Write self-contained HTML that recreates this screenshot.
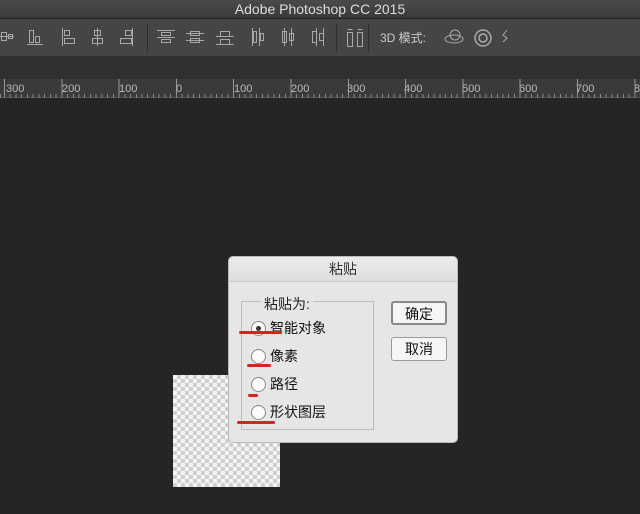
<!DOCTYPE html><html><head><meta charset="utf-8"><style>
*{margin:0;padding:0;box-sizing:border-box}
body{width:640px;height:514px;overflow:hidden;background:#252525;font-family:"Liberation Sans","Noto Sans CJK SC",sans-serif;position:relative}
.t{position:absolute;left:0;top:0;width:640px;height:19px;background:linear-gradient(#4a4a4a,#3a3a3a);border-bottom:1px solid #222;color:#ddd;font-size:14px;text-align:center;line-height:18px}
.tb{position:absolute;left:0;top:19px;width:640px;height:38px;background:#454545;border-bottom:1px solid #303030}
.strip{position:absolute;left:0;top:57px;width:640px;height:22px;background:#303030}
.ruler{position:absolute;left:0;top:79px;width:640px;height:19px;background:#3a3a3a;border-bottom:1px solid #555}
.ruler span{position:absolute;top:4px;font-size:11px;color:#bbb}
svg.i{position:absolute;top:28px}
.dlg{position:absolute;left:228px;top:256px;width:230px;height:187px;background:#e6e6e6;border-radius:5px;border:1px solid #bbb}
.dt{height:25px;border-bottom:1px solid #c8c8c8;text-align:center;font-size:14px;line-height:25px;color:#333;background:linear-gradient(#ececec,#dedede);border-radius:5px 5px 0 0}
.grp{position:absolute;left:12px;top:44px;width:133px;height:129px;border:1px solid #bdbdbd}
.lg{position:absolute;left:32px;top:37px;background:#e6e6e6;padding:0 3px;font-size:14px;color:#222}
.r{position:absolute;left:22px;font-size:14px;color:#111;line-height:16px}
.r i{display:inline-block;width:15px;height:15px;border-radius:50%;border:1px solid #888;background:#fafafa;vertical-align:-3px;margin-right:4px;position:relative}
.r i b{position:absolute;left:4px;top:4px;width:5px;height:5px;border-radius:50%;background:#333}
.btn{position:absolute;left:162px;width:56px;height:24px;border:1px solid #999;border-radius:3px;background:#f5f5f5;font-size:14px;text-align:center;line-height:22px;color:#111}
.red{position:absolute;height:3px;background:#e02020;border-radius:2px}
.chk{position:absolute;left:173px;top:375px;width:107px;height:112px;background-color:#f4f4f4;background-image:linear-gradient(45deg,#cfcfcf 25%,transparent 25%,transparent 75%,#cfcfcf 75%),linear-gradient(45deg,#cfcfcf 25%,transparent 25%,transparent 75%,#cfcfcf 75%);background-size:8px 8px;background-position:0 0,4px 4px}
</style></head><body>
<div class="t">Adobe Photoshop CC 2015</div>
<div class="tb"></div>
<svg class="i" style="left:0" width="14" height="18" fill="none" stroke="#a8a8a8"><rect x="1.5" y="4.5" width="5" height="8"/><rect x="8.5" y="6.5" width="4" height="4"/><path d="M0 8.5h14"/></svg>
<svg class="i" style="left:27" width="16" height="18" fill="none" stroke="#a8a8a8"><rect x="2.5" y="2.5" width="4" height="12"/><rect x="8.5" y="8.5" width="4" height="6"/><path d="M0 16.5h16"/></svg>
<svg class="i" style="left:61px" width="16" height="18" fill="none" stroke="#a8a8a8"><path d="M1.5 0v18"/><rect x="3.5" y="2.5" width="5" height="5"/><rect x="3.5" y="10.5" width="10" height="5"/></svg>
<svg class="i" style="left:90px" width="16" height="18" fill="none" stroke="#a8a8a8"><path d="M7.5 0v18"/><rect x="4.5" y="2.5" width="6" height="5"/><rect x="2.5" y="10.5" width="10" height="5"/></svg>
<svg class="i" style="left:118px" width="16" height="18" fill="none" stroke="#a8a8a8"><path d="M14.5 0v18"/><rect x="7.5" y="2.5" width="6" height="5"/><rect x="2.5" y="10.5" width="11" height="5"/></svg>
<div style="position:absolute;left:147px;top:24px;width:1px;height:28px;background:#2e2e2e"></div>
<svg class="i" style="left:157px" width="18" height="18" fill="none" stroke="#a8a8a8"><path d="M0 2.5h18M0 9.5h18"/><rect x="4.5" y="4.5" width="9" height="3"/><rect x="4.5" y="11.5" width="9" height="3"/></svg>
<svg class="i" style="left:186px" width="18" height="18" fill="none" stroke="#a8a8a8"><path d="M0 5.5h18M0 12.5h18"/><rect x="4.5" y="3.5" width="9" height="4"/><rect x="4.5" y="10.5" width="9" height="4"/></svg>
<svg class="i" style="left:216px" width="18" height="18" fill="none" stroke="#a8a8a8"><path d="M0 8.5h18M0 16.5h18"/><rect x="4.5" y="3.5" width="9" height="5"/><rect x="4.5" y="11.5" width="9" height="5"/></svg>
<svg class="i" style="left:250px" width="16" height="18" fill="none" stroke="#a8a8a8"><path d="M2.5 0v18M9.5 0v18"/><rect x="3.5" y="3.5" width="3" height="11"/><rect x="10.5" y="5.5" width="3" height="7"/></svg>
<svg class="i" style="left:280px" width="16" height="18" fill="none" stroke="#a8a8a8"><path d="M4.5 0v18M11.5 0v18"/><rect x="2.5" y="3.5" width="4" height="11"/><rect x="9.5" y="5.5" width="4" height="7"/></svg>
<svg class="i" style="left:310px" width="16" height="18" fill="none" stroke="#a8a8a8"><path d="M6.5 0v18M13.5 0v18"/><rect x="2.5" y="3.5" width="4" height="11"/><rect x="9.5" y="5.5" width="4" height="7"/></svg>
<div style="position:absolute;left:336px;top:24px;width:1px;height:28px;background:#2e2e2e"></div>
<svg class="i" style="left:346px" width="18" height="20" fill="none" stroke="#a8a8a8"><path d="M1.5 1.5h5M11.5 1.5h5"/><rect x="1.5" y="4.5" width="5" height="14"/><rect x="11.5" y="4.5" width="5" height="14"/></svg>
<div style="position:absolute;left:368px;top:24px;width:1px;height:28px;background:#2e2e2e"></div>
<div style="position:absolute;left:380px;top:29px;color:#ccc;font-size:12px">3D 模式:</div>
<svg class="i" style="left:444px" width="22" height="18" fill="none" stroke="#aaa"><circle cx="11" cy="7" r="5"/><ellipse cx="10" cy="11" rx="9" ry="4"/></svg>
<svg class="i" style="left:473px" width="20" height="20" fill="none" stroke="#aaa" stroke-width="1.5"><circle cx="10" cy="10" r="8"/><circle cx="10" cy="10" r="4"/></svg>
<svg class="i" style="left:500px" width="10" height="18" fill="none" stroke="#aaa"><path d="M7 2l-4 5l4 3l-4 4"/></svg>
<div class="strip"></div>
<div class="ruler">
<span style="left:6px">300</span><span style="left:62px">200</span><span style="left:119px">100</span><span style="left:176px">0</span><span style="left:234px">100</span><span style="left:291px">200</span><span style="left:347px">300</span><span style="left:404px">400</span><span style="left:462px">500</span><span style="left:519px">600</span><span style="left:576px">700</span><span style="left:634px">80</span>
<div style="position:absolute;left:0;top:0;width:640px;height:19px;background:repeating-linear-gradient(90deg,#999 0 1px,transparent 1px 57.3px) 4px 0/640px 19px no-repeat"></div>
<div style="position:absolute;left:0;top:15px;width:640px;height:4px;background:repeating-linear-gradient(90deg,#888 0 1px,transparent 1px 5.73px) 4px 0"></div>
</div>
<div class="chk"></div>
<div class="dlg"><div class="dt">粘贴</div>
<div class="grp"></div><div class="lg">粘贴为:</div>
<div class="r" style="top:63px"><i><b></b></i>智能对象</div>
<div class="r" style="top:91px"><i></i>像素</div>
<div class="r" style="top:119px"><i></i>路径</div>
<div class="r" style="top:147px"><i></i>形状图层</div>
<div class="btn" style="top:44px;border:2px solid #888">确定</div>
<div class="btn" style="top:80px">取消</div>
</div>
<div class="red" style="left:239px;top:331px;width:43px"></div>
<div class="red" style="left:247px;top:364px;width:24px"></div>
<div class="red" style="left:248px;top:394px;width:10px"></div>
<div class="red" style="left:237px;top:421px;width:38px"></div>
</body></html>
